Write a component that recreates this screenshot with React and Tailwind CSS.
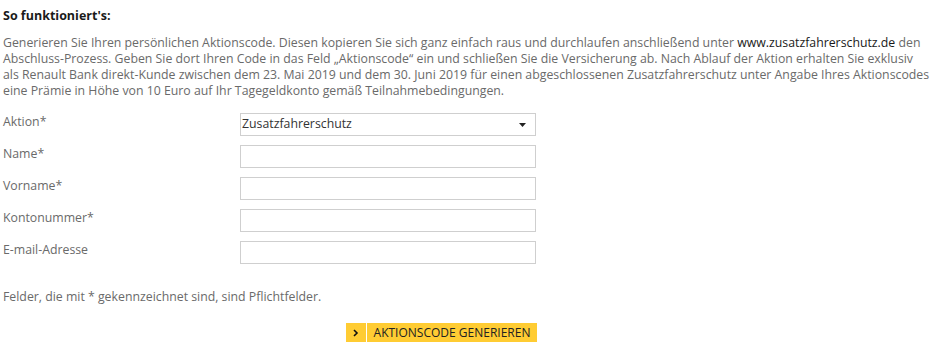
export default function App() {
  const rows = ["Name*", "Vorname*", "Kontonummer*", "E-mail-Adresse"];
  return (
    <div className="w-[937px] h-[361px] bg-white pl-[3px] pt-[8px] font-['Open_Sans',sans-serif] text-[12.3px] text-[#6a6a6a]">
      <div className="font-bold text-[#1a1a1a] leading-[16px] text-[12.5px]">So funktioniert's:</div>
      <p className="mt-[11px] leading-[16px] whitespace-nowrap">
        Generieren Sie Ihren persönlichen Aktionscode. Diesen kopieren Sie sich ganz einfach raus und durchlaufen anschließend unter{" "}
        <span className="text-[#1a1a1a]">www.zusatzfahrerschutz.de</span> den
        <br />
        Abschluss-Prozess. Geben Sie dort Ihren Code in das Feld „Aktionscode“ ein und schließen Sie die Versicherung ab. Nach Ablauf der Aktion erhalten Sie exklusiv
        <br />
        als Renault Bank direkt-Kunde zwischen dem 23. Mai 2019 und dem 30. Juni 2019 für einen abgeschlossenen Zusatzfahrerschutz unter Angabe Ihres Aktionscodes
        <br />
        eine Prämie in Höhe von 10 Euro auf Ihr Tagegeldkonto gemäß Teilnahmebedingungen.
      </p>
      <div className="mt-[14px] w-[533px] flex flex-col gap-[9px]">
        <div className="flex items-start">
          <div className="w-[237px] leading-[16px] pt-[1px]">Aktion*</div>
          <div className="w-[296px] h-[23px] border border-[#cfcfcf] flex items-center justify-between pl-[1px] pr-[9px] text-[#333]">
            <span>Zusatzfahrerschutz</span>
            <svg width="7" height="4" viewBox="0 0 7 4"><path d="M0 0h7L3.5 4z" fill="#222" /></svg>
          </div>
        </div>
        {rows.map((r) => (
          <div key={r} className="flex items-start">
            <div className="w-[237px] leading-[16px] pt-[1px]">{r}</div>
            <div className="w-[296px] h-[23px] border border-[#cfcfcf] bg-white" />
          </div>
        ))}
      </div>
      <div className="mt-[25px] leading-[16px]">Felder, die mit * gekennzeichnet sind, sind Pflichtfelder.</div>
      <div className="mt-[18px] w-[534px] flex justify-end gap-[1px]">
        <div className="w-[20px] h-[19px] bg-[#ffcc33] flex items-center justify-center">
          <svg width="6" height="8" viewBox="0 0 6 8"><path d="M1 1l3 3-3 3" stroke="#111" strokeWidth="1.6" fill="none" /></svg>
        </div>
        <div className="w-[170px] h-[19px] bg-[#ffcc33] flex items-center justify-center text-[#222] text-[12px]">AKTIONSCODE GENERIEREN</div>
      </div>
    </div>
  );
}
